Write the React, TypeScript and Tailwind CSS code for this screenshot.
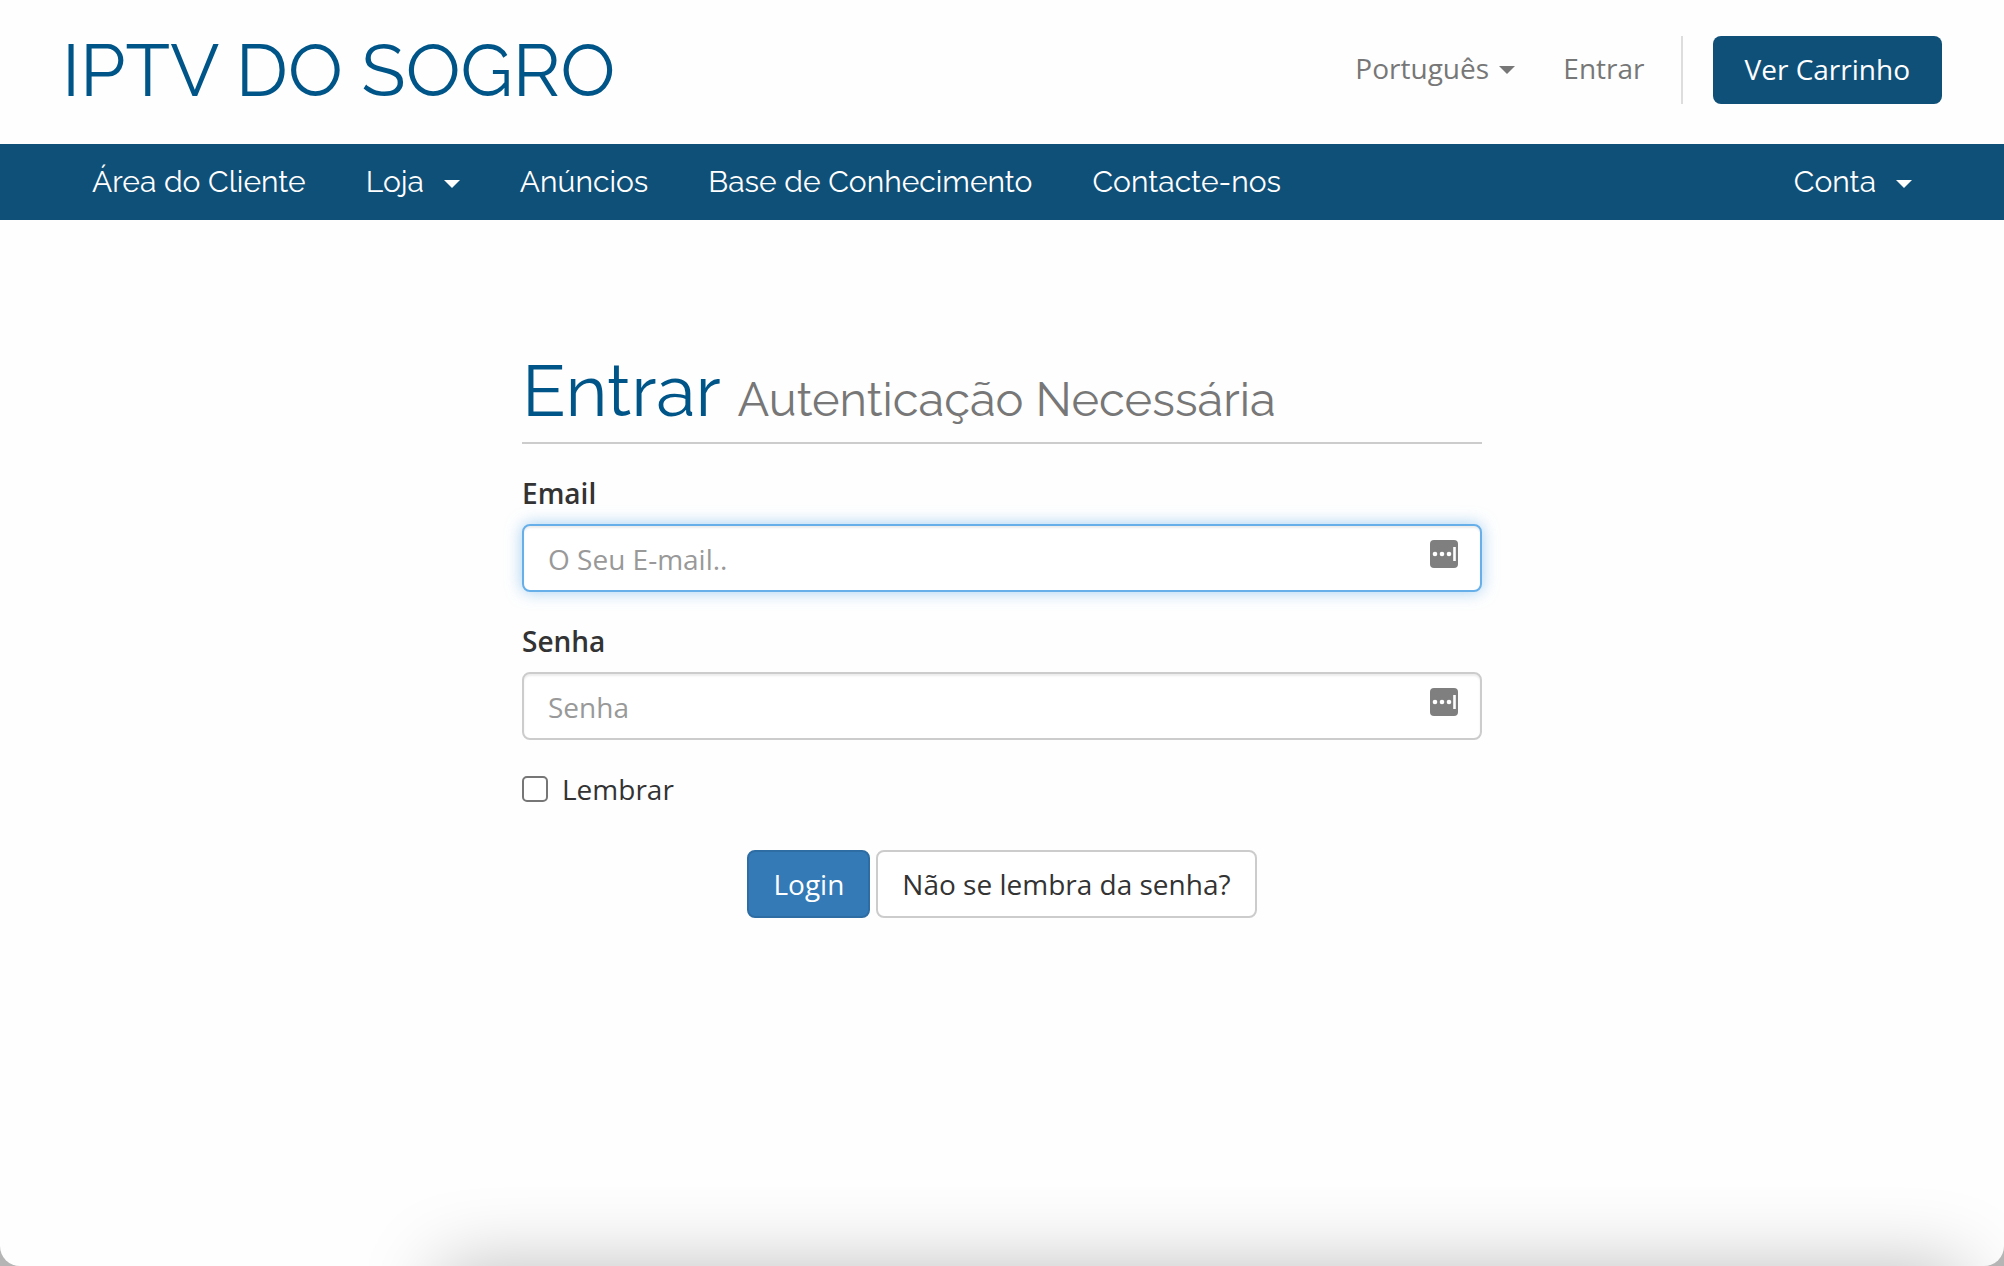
import { clsx } from 'clsx';

const navItems = [
  { label: 'Área do Cliente' },
  { label: 'Loja', menu: true },
  { label: 'Anúncios' },
  { label: 'Base de Conhecimento' },
  { label: 'Contacte-nos' },
];

function Caret() {
  return (
    <svg viewBox="0 0 16 8" className="mt-1 h-2 w-4 shrink-0" aria-hidden="true">
      <path d="M0 0h16L8 8z" fill="currentColor" />
    </svg>
  );
}

function NavItem({ label, menu }: { label: string; menu?: boolean }) {
  const className = 'flex items-center gap-5 whitespace-nowrap';
  if (!menu) {
    return <a href="#" className={className}>{label}</a>;
  }
  return (
    <button type="button" aria-haspopup="menu" className={className}>
      {label}
      <Caret />
    </button>
  );
}

function PasswordManagerIcon() {
  return (
    <svg viewBox="0 0 28 28" className="pointer-events-none absolute top-4 right-6 size-7" aria-hidden="true">
      <rect width="28" height="28" rx="4" fill="#7f7f7f" />
      <circle cx="5" cy="14" r="2.3" fill="#fff" />
      <circle cx="12" cy="14" r="2.3" fill="#fff" />
      <circle cx="19" cy="14" r="2.3" fill="#fff" />
      <rect x="23.2" y="7" width="2.6" height="14" fill="#fff" />
    </svg>
  );
}

type FieldProps = {
  id: string;
  label: string;
  type: string;
  placeholder: string;
  active?: boolean;
};

function Field({ id, label, type, placeholder, active }: FieldProps) {
  return (
    <div className="mb-[29px]">
      <label htmlFor={id} className="mb-[11px] block leading-10 font-semibold">{label}</label>
      <div className="relative">
        <input
          id={id}
          type={type}
          placeholder={placeholder}
          className={clsx(
            'block h-17 w-full rounded-lg border-2 bg-white px-6 pt-0.5 outline-none placeholder:text-[#999]',
            active
              ? 'border-[#66afe9] shadow-[inset_0_2px_2px_rgba(0,0,0,0.075),0_0_16px_rgba(102,175,233,0.6)]'
              : 'border-[#ccc] shadow-[inset_0_2px_2px_rgba(0,0,0,0.075)]',
          )}
        />
        <PasswordManagerIcon />
      </div>
    </div>
  );
}

export default function App() {
  return (
    <div className="min-h-screen bg-[#b5b5b5]">
      <div className="relative min-h-screen overflow-hidden rounded-b-[20px] bg-[#fefefe] font-['Open_Sans',sans-serif] text-[28px] leading-10 text-[#333]">
        <header className="flex items-start justify-between px-[62px] pt-9 pb-10">
          <a href="#" className="font-['Raleway','Lato',sans-serif] text-[73px] leading-[68px] text-[#058]">
            IPTV DO SOGRO
          </a>
          <div className="flex items-center text-[#777]">
            <div className="flex items-center gap-2.5 pb-1">
              <select aria-label="Idioma" className="h-12 appearance-none bg-transparent leading-12 outline-none">
                <option>Português</option>
              </select>
              <Caret />
            </div>
            <a href="#" className="ml-12 pb-1">Entrar</a>
            <a href="#" className="relative ml-17 flex h-17 items-center rounded-lg bg-[#0f5078] px-8 pb-0.5 text-white before:absolute before:top-0 before:-left-8 before:h-17 before:w-0.5 before:bg-[#ddd]">
              Ver Carrinho
            </a>
          </div>
        </header>

        <nav className="flex h-19 items-center justify-between bg-[#0f5078] px-[92px] font-['Raleway','Lato',sans-serif] text-[30px] text-white">
          <div className="flex items-center gap-15">
            {navItems.map((item) => (
              <NavItem key={item.label} {...item} />
            ))}
          </div>
          <NavItem label="Conta" menu />
        </nav>

        <main className="mx-auto max-w-[960px] pt-33">
          <h1 className="mb-[29px] border-b-2 border-[#ccc] pb-[3px] font-['Raleway','Lato',sans-serif] text-[72px] leading-[78px] text-[#058]">
            Entrar <small className="text-[47px] text-[#777]">Autenticação Necessária</small>
          </h1>
          <form onSubmit={(e) => e.preventDefault()}>
            <Field id="email" label="Email" type="email" placeholder="O Seu E-mail.." active />
            <Field id="password" label="Senha" type="password" placeholder="Senha" />
            <label className="flex items-center gap-3.5">
              <input type="checkbox" className="size-[26px] appearance-none rounded-[5px] border-2 border-[#767676] bg-white" />
              Lembrar
            </label>
            <div className="mt-[41px] flex justify-center gap-1.5">
              <button type="submit" className="h-17 rounded-lg border-2 border-[#2e6da4] bg-[#337ab7] px-6 text-white">
                Login
              </button>
              <a href="#" className="flex h-17 items-center rounded-lg border-2 border-[#ccc] bg-white px-6">
                Não se lembra da senha?
              </a>
            </div>
          </form>
        </main>

        <div className="pointer-events-none absolute top-full right-10 left-[440px] h-40 shadow-[0_0_76px_rgba(0,0,0,0.25)]" />
      </div>
    </div>
  );
}
